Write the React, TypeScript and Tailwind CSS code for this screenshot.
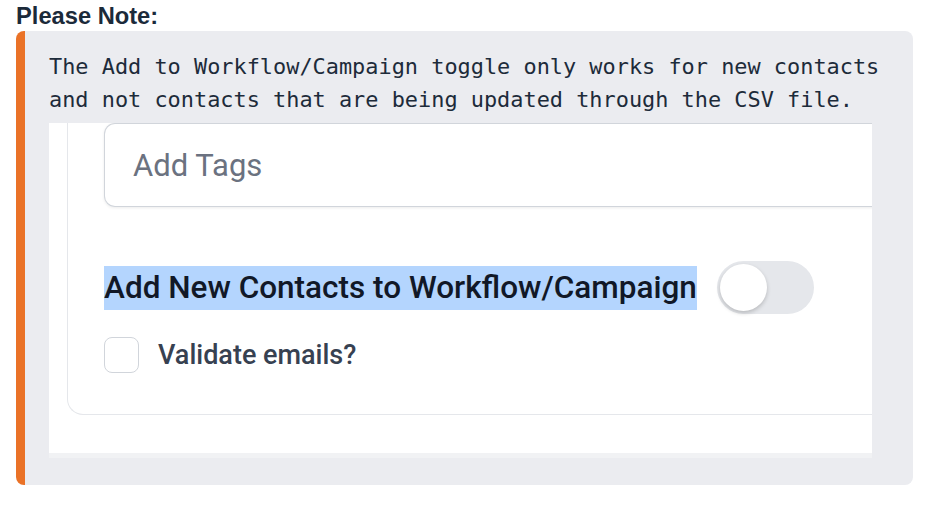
import React from "react";

export default function App() {
  return (
    <div className="w-[926px] h-[507px] bg-white relative overflow-hidden">
      <div className="pl-[16px] pt-[3px]">
        <div
          className="text-[23.7px] leading-[26px] font-bold text-[#1b2a3a]"
          style={{ fontFamily: "'Liberation Sans', Arial, sans-serif" }}
        >
          Please Note:
        </div>
        <div className="mt-[2px] w-[897px] rounded-[8px] border-l-[9px] border-[#ea7227] bg-[#ebecf0] pl-[24px] pr-[41px] pt-[19px] pb-[27px]">
          <div
            className="text-[21.9px] leading-[33px] text-[#1d2b3a] whitespace-pre"
            style={{ fontFamily: "'DejaVu Sans Mono', monospace" }}
          >
            The Add to Workflow/Campaign toggle only works for new contacts
            <br />
            and not contacts that are being updated through the CSV file.
          </div>
          <div className="mt-[7px] w-[823px] h-[335px] overflow-hidden bg-[#f1f2f4]">
            <div
              className="h-[330px] bg-white overflow-hidden"
              style={{ fontFamily: "Roboto, sans-serif" }}
            >
              <div className="ml-[18px] mr-[-40px] h-[292px] border-l border-b border-[#e5e7eb] rounded-bl-[16px] pl-[36px]">
                <div className="h-[84px] rounded-l-[11px] border border-r-0 border-[#d1d5db] shadow-[0_1px_3px_rgba(0,0,0,0.08)] flex items-center pl-[28px]">
                  <span className="text-[31px] text-[#6b7280] leading-none">Add Tags</span>
                </div>
                <div className="mt-[54px] flex items-center">
                  <span className="bg-[#b4d5fe] text-[31.5px] font-medium text-[#111827] leading-[44px] px-0">
                    Add New Contacts to Workflow/Campaign
                  </span>
                  <div className="ml-[20px] w-[97px] h-[53px] rounded-full bg-[#e5e7eb] p-[3px] flex items-center">
                    <div className="w-[47px] h-[47px] rounded-full bg-white shadow-[0_2px_4px_rgba(0,0,0,0.2)]" />
                  </div>
                </div>
                <div className="mt-[23px] flex items-center">
                  <div className="w-[35px] h-[36px] rounded-[8px] border border-[#d1d5db] bg-white" />
                  <span className="ml-[19px] text-[27px] font-medium text-[#374151] leading-none">
                    Validate emails?
                  </span>
                </div>
              </div>
            </div>
          </div>
        </div>
      </div>
    </div>
  );
}
